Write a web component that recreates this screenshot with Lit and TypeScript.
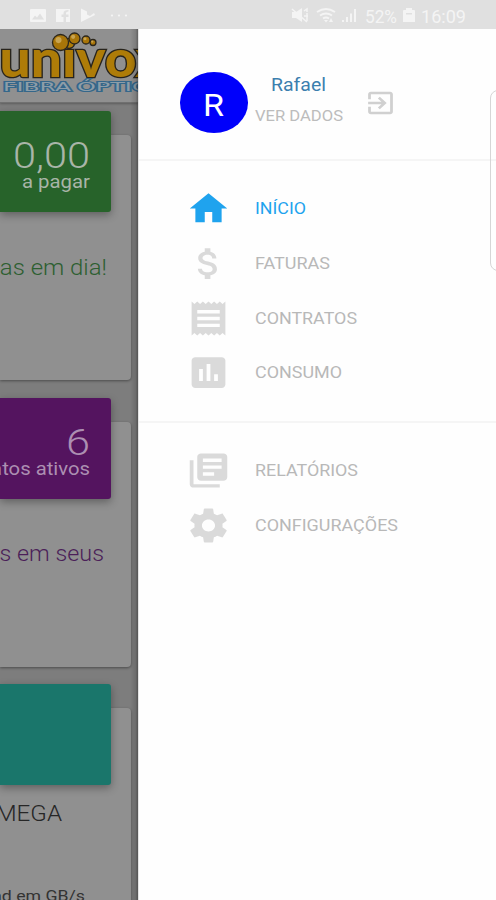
import { LitElement, html, css, svg, nothing } from "lit";
import { customElement, property } from "lit/decorators.js";

/* One line of text fitted to a given advance width. */
@customElement("fit-text")
class FitText extends LitElement {
  @property() text = "";
  @property({ type: Number }) width = 100;
  @property({ type: Number }) size = 16;
  static styles = css`
    :host { display: block; line-height: 0; }
    svg { display: block; overflow: visible; }
    text { fill: currentColor; }
  `;
  render() {
    const h = Math.round(this.size * 1.2);
    return html`<svg width=${this.width} height=${h}>
      <text x="0" y=${h * 0.8} font-size=${this.size} textLength=${this.width} lengthAdjust="spacingAndGlyphs">${this.text}</text>
    </svg>`;
  }
}

const ICONS: Record<string, string> = {
  home: "M10 20v-6h4v6h5v-8h3L12 3 2 12h3v8z",
  money: "M11.8 10.9c-2.27-.59-3-1.2-3-2.15 0-1.09 1.01-1.85 2.7-1.85 1.78 0 2.44.85 2.5 2.1h2.21c-.07-1.72-1.12-3.3-3.21-3.81V3h-3v2.16c-1.94.42-3.5 1.68-3.5 3.61 0 2.31 1.91 3.46 4.7 4.13 2.5.6 3 1.48 3 2.41 0 .69-.49 1.79-2.7 1.79-2.06 0-2.87-.92-2.98-2.1h-2.2c.12 2.19 1.76 3.42 3.68 3.83V21h3v-2.15c1.95-.37 3.5-1.5 3.5-3.55 0-2.84-2.43-3.81-4.7-4.4z",
  receipt: "M18 17H6v-2h12v2zm0-4H6v-2h12v2zm0-4H6V7h12v2zM3 22l1.5-1.5L6 22l1.5-1.5L9 22l1.5-1.5L12 22l1.5-1.5L15 22l1.5-1.5L18 22l1.5-1.5L21 22V2l-1.5 1.5L18 2l-1.5 1.5L15 2l-1.5 1.5L12 2l-1.5 1.5L9 2 7.5 3.5 6 2 4.5 3.5 3 2v20z",
  chart: "M19 3H5c-1.1 0-2 .9-2 2v14c0 1.1.9 2 2 2h14c1.1 0 2-.9 2-2V5c0-1.1-.9-2-2-2zM9 17H7v-7h2v7zm4 0h-2V7h2v10zm4 0h-2v-4h2v4z",
  library: "M4 6H2v14c0 1.1.9 2 2 2h14v-2H4V6zm16-4H8c-1.1 0-2 .9-2 2v12c0 1.1.9 2 2 2h12c1.1 0 2-.9 2-2V4c0-1.1-.9-2-2-2zm-1 9H9V9h10v2zm-4 4H9v-2h6v2zm4-8H9V5h10v2z",
  settings: "M19.43 12.98c.04-.32.07-.64.07-.98s-.03-.66-.07-.98l2.11-1.65c.19-.15.24-.42.12-.64l-2-3.46c-.12-.22-.39-.3-.61-.22l-2.49 1c-.52-.4-1.08-.73-1.69-.98l-.38-2.65C14.46 2.18 14.25 2 14 2h-4c-.25 0-.46.18-.49.42l-.38 2.65c-.61.25-1.17.59-1.69.98l-2.49-1c-.23-.09-.49 0-.61.22l-2 3.46c-.13.22-.07.49.12.64l2.11 1.65c-.04.32-.07.65-.07.98s.03.66.07.98l-2.11 1.65c-.19.15-.24.42-.12.64l2 3.46c.12.22.39.3.61.22l2.49-1c.52.4 1.08.73 1.69.98l.38 2.65c.03.24.24.42.49.42h4c.25 0 .46-.18.49-.42l.38-2.65c.61-.25 1.17-.59 1.69-.98l2.49 1c.23.09.49 0 .61-.22l2-3.46c.12-.22.07-.49-.12-.64l-2.11-1.65zM12 15.5c-1.93 0-3.5-1.57-3.5-3.5s1.57-3.5 3.5-3.5 3.5 1.57 3.5 3.5-1.57 3.5-3.5 3.5z",
  exit: "M10.09 15.59L11.5 17l5-5-5-5-1.41 1.41L12.67 11H3v2h9.67l-2.58 2.59zM19 3H5c-1.11 0-2 .9-2 2v4h2V5h14v14H5v-4H3v4c0 1.1.89 2 2 2h14c1.1 0 2-.9 2-2V5c0-1.1-.9-2-2-2z",
};

type Item = { icon: string; label: string; width: number; active?: boolean };
const MAIN: Item[] = [
  { icon: "home", label: "INÍCIO", width: 51, active: true },
  { icon: "money", label: "FATURAS", width: 75 },
  { icon: "receipt", label: "CONTRATOS", width: 102 },
  { icon: "chart", label: "CONSUMO", width: 87 },
];
const MORE: Item[] = [
  { icon: "library", label: "RELATÓRIOS", width: 103 },
  { icon: "settings", label: "CONFIGURAÇÕES", width: 143 },
];

@customElement("app-root")
class AppRoot extends LitElement {
  static styles = css`
    * { box-sizing: border-box; }
    :host {
      display: flex; flex-direction: column; width: 496px; height: 900px; overflow: hidden;
      background: #fefefe; font-family: Roboto, sans-serif;
    }
    .status { flex: none; height: 29px; background: #e0e0e0; color: #f4f4f4; }
    .status svg { display: block; }
    .body { flex: 1; display: flex; min-height: 0; }
    .page {
      width: 138px; flex: none; overflow: hidden; background: #7d7d7d; position: relative;
      display: flex; flex-direction: column;
    }
    .page::after {
      content: ""; position: absolute; right: 0; top: 0; bottom: 0; width: 8px;
      background: linear-gradient(90deg, #0000, #0002 70%, #0005);
    }
    .logo { flex: none; height: 74px; background: #909090; border-bottom: 1px solid #707070; box-shadow: 0 1px 2px #0004; }
    .logo svg { display: block; }
    .brand { font: 900 52px Lato, sans-serif; fill: #ae7c08; stroke: #28241c; stroke-width: 2.6px; paint-order: stroke; }
    .sub { font: 400 11.5px "DejaVu Sans", sans-serif; fill: #8d9da8; stroke: #35678a; stroke-width: 2px; paint-order: stroke; }
    .cards { display: flex; flex-direction: column; gap: 41.5px; padding: 32px 7px 0 0; }
    .card {
      flex: none; height: 245px; background: #909090; border-radius: 0 4px 4px 0;
      box-shadow: 0 1px 3px #0006; display: flex; flex-direction: column; align-items: flex-end;
    }
    .tile {
      flex: none; width: 111px; height: 101px; margin: -24px 20px 0 0; padding-right: 21px; border-radius: 0 3px 3px 0;
      display: flex; flex-direction: column; align-items: flex-end; color: #a9b5a8;
      box-shadow: 0 3px 8px #0005;
    }
    .green { background: #27632a; }
    .purple { background: #54145f; color: #ac8fb2; }
    .teal { background: #1a766b; }
    .amount { display: flex; justify-content: flex-end; gap: 12px; margin-top: 22px; font-weight: 300; }
    .unit { margin-top: -6px; }
    .note { font-weight: 300; margin: 42px 24px 0 0; }
    .note.g { color: #2d5f31; }
    .note.p { color: #4b1f59; margin: 41px 27px 0 0; }
    .note.k { color: #262626; margin: 15px 69px 0 0; }
    .foot { color: #333; margin: 60.5px 46px 0 0; }
    .drawer { flex: 1; display: flex; flex-direction: column; position: relative; border-left: 1px solid #e3e3e3; }
    .user { height: 131.5px; flex: none; display: flex; padding: 43px 0 0 40.5px; border-bottom: 2px solid #f5f5f5; }
    .avatar {
      width: 68.5px; height: 61px; border-radius: 50%; background: #0000fb; color: #fff;
      display: flex; align-items: center; justify-content: center; padding-top: 3px;
    }
    .who { margin: 2px 0 0 6.5px; display: flex; flex-direction: column; align-items: center; gap: 10.5px; width: 88px; color: #bcbcbc; }
    .name { color: #3b7fae; }
    .exit { margin: 16px 0 0 21px; color: #d0d0d0; }
    .menu { display: flex; flex-direction: column; flex: none; padding-top: 20.7px; height: 262px; border-bottom: 2px solid #f5f5f5; }
    .menu.more { padding-top: 21px; border: 0; }
    .row { height: 54.8px; flex: none; display: flex; align-items: center; padding-left: 46.500px; gap: 24.500px; color: #b8b8b8; }
    .row .glyph { color: #dadada; display: flex; }
    .row.active, .row.active .glyph { color: #1fa3ee; }
    .panel {
      position: absolute; left: 350.5px; top: 61px; width: 40px; height: 181px; border: 1px solid #d6d6d6;
      border-radius: 8px;
    }
  `;

  icon(name: string, w: number, h: number) {
    return html`<svg width=${w} height=${h} viewBox="0 0 24 24" preserveAspectRatio="none"><path fill="currentColor" d=${ICONS[name]}></path></svg>`;
  }

  row(i: Item) {
    return html`<div class="row ${i.active ? "active" : ""}">
      <span class="glyph">${this.icon(i.icon, 45, 41)}</span>
      <fit-text .text=${i.label} .width=${i.width} .size=${15.8}></fit-text>
    </div>`;
  }

  ball(cx: number, cy: number, r: number) {
    return svg`<circle cx=${cx} cy=${cy} r=${r} fill="#a87509" stroke="#2b261c" stroke-width="1.3"></circle>
      <circle cx=${cx - r * 0.25} cy=${cy - r * 0.3} r=${r * 0.38} fill="#c8a451"></circle>`;
  }

  status() {
    return html`<div class="status"><svg width="496" height="29" fill="currentColor">
      <path fill-rule="evenodd" d="M31 9h14q1 0 1 1v11q0 1-1 1H31q-1 0-1-1V10q0-1 1-1zM32 19.500h12l-4-6-3 4-2-2z"></path>
      <path d="M56 9h14v13h-4v-5h2.500v-2.500H66v-1.500q0-1.500 2.500-1.500V10q-5 0-5 3v1.500h-2V17h2v5H56z"></path>
      <path d="M81 8.500l6 3 0 3 3 1.500 4-3 1 2-14 7z"></path>
      <circle cx="112" cy="15.500" r="1.100"></circle><circle cx="119" cy="15.500" r="1.100"></circle><circle cx="126" cy="15.500" r="1.100"></circle>
      <path d="M292 12h4l6-4v14l-6-4h-4z"></path>
      <path d="M292 9l15 13M304 11l3-2v3M304 16h4M307 13v8" fill="none" stroke="currentColor" stroke-width="1.500"></path>
      <g fill="none" stroke="currentColor" stroke-width="1.800"><path d="M317 12q9-6 18 0M320 15.500q6-4 12 0M323 18.500q3-2 6 0"></path></g>
      <path d="M324 20h4l-2 2.500zM331 18l2 4h-4zM342 20h2v2h-2zM346 17h2v5h-2zM350 13.500h2V22h-2zM354 9h2v13h-2z"></path>
      <text x="365" y="22.500" font-size="18" textLength="32" lengthAdjust="spacingAndGlyphs">52%</text>
      <path fill-rule="evenodd" d="M406 8h6v2h2q1 0 1 1v11h-12V11q0-1 1-1h2zM406 13v1.500h6V13z"></path>
      <text x="421" y="22.500" font-size="18" textLength="45" lengthAdjust="spacingAndGlyphs">16:09</text>
    </svg></div>`;
  }

  card(tone: string, currency: string, value: string, vw: number, unit: string, uw: number, rest: unknown) {
    return html`<div class="card"><div class="tile ${tone}">
      ${value
        ? html`<div class="amount">
              ${currency ? html`<fit-text .text=${currency} .width=${48} .size=${37}></fit-text>` : nothing}
              <fit-text .text=${value} .width=${vw} .size=${37}></fit-text>
            </div>
            <fit-text class="unit" .text=${unit} .width=${uw} .size=${17.5}></fit-text>`
        : nothing}
    </div>${rest}</div>`;
  }

  render() {
    return html`${this.status()}
      <div class="body">
        <div class="page">
          <div class="logo"><svg width="138" height="73">
            <text class="brand" x="-0.500" y="48" textLength="165" lengthAdjust="spacingAndGlyphs">univox</text>
            ${this.ball(60.5, 13.5, 8)}${this.ball(74.5, 9.5, 5.5)}${this.ball(86, 11, 4)}${this.ball(93, 13.5, 3)}
            <text class="sub" x="3" y="61.500" textLength="68" lengthAdjust="spacingAndGlyphs">FIBRA</text>
            <text class="sub" x="77" y="61.500" textLength="88" lengthAdjust="spacingAndGlyphs">ÓPTICA</text>
          </svg></div>
          <div class="cards">
            ${this.card("green", "R$", "0,00", 77, "a pagar", 68,
              html`<fit-text class="note g" .text=${"Contas em dia!"} .width=${157} .size=${22}></fit-text>`)}
            ${this.card("purple", "", "6", 24, "Contratos ativos", 148,
              html`<fit-text class="note p" .text=${"Detalhes em seus"} .width=${182} .size=${22}></fit-text>`)}
            ${this.card("teal", "", "", 0, "", 0,
              html`<fit-text class="note k" .text=${"10 MEGA"} .width=${99} .size=${22}></fit-text>
                <fit-text class="foot" .text=${"Download em GB/s"} .width=${152} .size=${15}></fit-text>`)}
          </div>
        </div>
        <div class="drawer">
          <div class="user">
            <div class="avatar"><fit-text .text=${"R"} .width=${21} .size=${31}></fit-text></div>
            <div class="who">
              <fit-text class="name" .text=${"Rafael"} .width=${55} .size=${17.5}></fit-text>
              <fit-text .text=${"VER DADOS"} .width=${88} .size=${15.5}></fit-text>
            </div>
            <div class="exit">${this.icon("exit", 33, 30)}</div>
          </div>
          <div class="menu">${MAIN.map((i) => this.row(i))}</div>
          <div class="menu more">${MORE.map((i) => this.row(i))}</div>
          <div class="panel"></div>
        </div>
      </div>`;
  }
}
